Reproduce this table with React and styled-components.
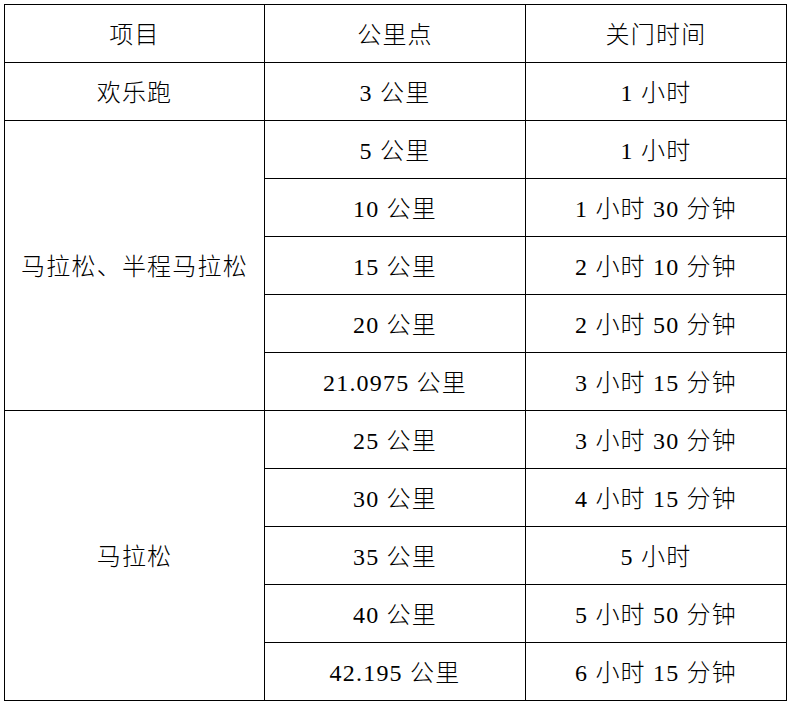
import React from "react";
import styled, { createGlobalStyle } from "styled-components";

const Global = createGlobalStyle`
  html, body { margin: 0; padding: 0; background: #fff; }
  body { font-family: "Liberation Serif", "Noto Sans CJK SC", serif; color: #000; }
`;

const Page = styled.div`
  padding: 4px 0 0 4px;
`;

const Table = styled.table`
  border-collapse: collapse;
  table-layout: fixed;
  width: 782px;
  font-family: "Liberation Serif", "Noto Sans CJK SC", serif;
  font-size: 24px;
  font-weight: 300;
  letter-spacing: 1.2px;
`;

const Cell = styled.td`
  border: 1.5px solid #000;
  height: 55px;
  padding: 2px 0 0 0;
  text-align: center;
  vertical-align: middle;
  white-space: nowrap;
  line-height: 1;
`;

const Col = styled.col`
  width: ${(p) => p.$w}px;
`;

const groups = [
  { name: "项目", rows: [["公里点", "关门时间"]] },
  { name: "欢乐跑", rows: [["3 公里", "1 小时"]] },
  {
    name: "马拉松、半程马拉松",
    rows: [
      ["5 公里", "1 小时"],
      ["10 公里", "1 小时 30 分钟"],
      ["15 公里", "2 小时 10 分钟"],
      ["20 公里", "2 小时 50 分钟"],
      ["21.0975 公里", "3 小时 15 分钟"],
    ],
  },
  {
    name: "马拉松",
    rows: [
      ["25 公里", "3 小时 30 分钟"],
      ["30 公里", "4 小时 15 分钟"],
      ["35 公里", "5 小时"],
      ["40 公里", "5 小时 50 分钟"],
      ["42.195 公里", "6 小时 15 分钟"],
    ],
  },
];

export default function App() {
  return (
    <Page>
      <Global />
      <Table>
        <colgroup>
          <Col $w={260} />
          <Col $w={261} />
          <Col $w={261} />
        </colgroup>
        <tbody>
          {groups.map((g) =>
            g.rows.map((r, i) => (
              <tr key={g.name + i}>
                {i === 0 && <Cell rowSpan={g.rows.length}>{g.name}</Cell>}
                <Cell>{r[0]}</Cell>
                <Cell>{r[1]}</Cell>
              </tr>
            ))
          )}
        </tbody>
      </Table>
    </Page>
  );
}
